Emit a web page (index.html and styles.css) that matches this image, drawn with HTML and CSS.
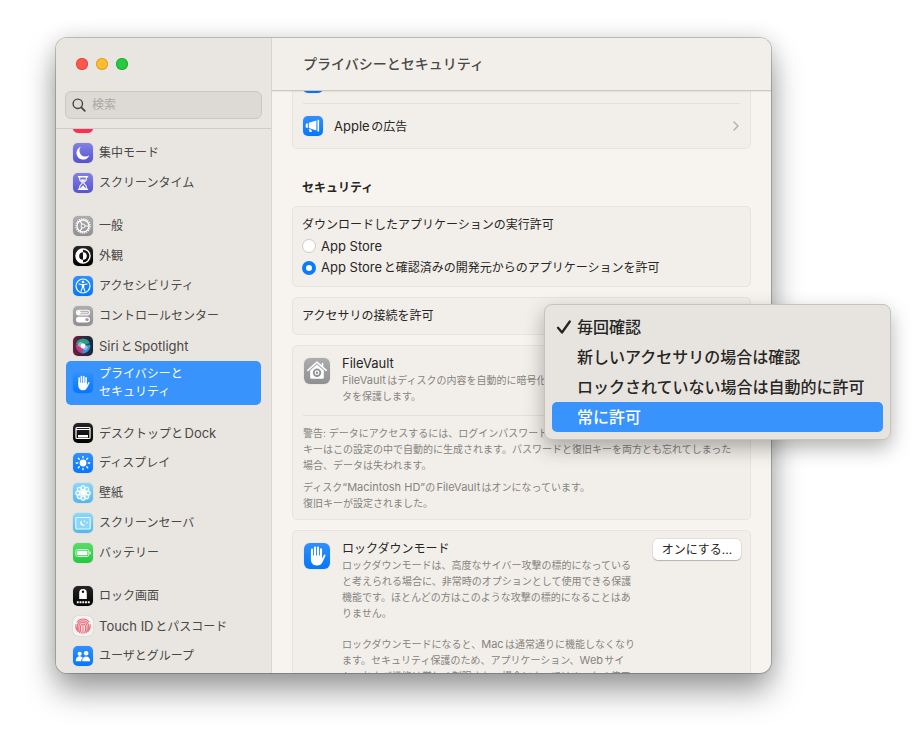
FILE: index.html
```html
<!DOCTYPE html>
<html lang="ja">
<head>
<meta charset="utf-8">
<meta name="viewport" content="width=device-width, initial-scale=1">
<title>プライバシーとセキュリティ</title>
<link rel="stylesheet" href="styles.css">
</head>
<body>
<svg class="defs" aria-hidden="true">
  <symbol id="hand" viewBox="0 0 26 26">
    <path d="M8 6.600V14M11 4.600V14M14 4.600V14M17 6.400V14" fill="none" stroke="#fff" stroke-width="2.100" stroke-linecap="round"/>
    <path d="M6.900 12.600H18v3.200l1.600-3.200q.7-1.400 1.600-.9.600.4.200 1.400L18.600 19q-1.600 3.500-5.800 3.500c-4 0-5.900-2.900-5.900-6.500z" fill="#fff"/>
  </symbol>
</svg>
<div class="desktop">
  <div class="window">
    <aside class="sidebar">
      <div class="lights">
        <button class="light red" aria-label="閉じる"></button>
        <button class="light yellow" aria-label="しまう"></button>
        <button class="light green" aria-label="拡大"></button>
      </div>
      <label class="search">
        <svg viewBox="0 0 14 14" width="14" height="14" aria-hidden="true"><circle cx="5.800" cy="5.800" r="4.700" fill="none" stroke="#464543" stroke-width="1.400"/><path d="M9.300 9.300l3.500 3.500" stroke="#464543" stroke-width="1.800" stroke-linecap="round"/></svg>
        <input type="search" placeholder="検索" aria-label="検索">
      </label>
      <nav class="nav">
        <ul class="group">
          <li><a class="item" href="#"><span class="icon pink"></span></a></li>
          <li><a class="item" href="#"><span class="icon purple"><svg viewBox="0 0 20 20"><path d="M7.800 3.800A6.600 6.600 0 1 0 16.300 12.200 6 6 0 0 1 7.800 3.800z" fill="#fff"/></svg></span><span>集中モード</span></a></li>
          <li><a class="item" href="#"><span class="icon purple"><svg viewBox="0 0 20 20"><path d="M5.500 3.800h9M5.500 16.200h9" stroke="#fff" stroke-width="1.500" stroke-linecap="round"/><path d="M6.700 4v2.200c0 2 2.600 2.600 2.600 3.800s-2.600 1.800-2.600 3.800V16h6.600v-2.200c0-2-2.600-2.600-2.600-3.800s2.600-1.800 2.600-3.800V4" fill="none" stroke="#fff" stroke-width="1.100"/><path d="M7.500 6.400h5L10 9.400zM7.200 15.500l2.800-3.300 2.800 3.300z" fill="#fff"/></svg></span><span>スクリーンタイム</span></a></li>
        </ul>
        <ul class="group">
          <li><a class="item" href="#"><span class="icon gray"><svg viewBox="0 0 20 20" fill="none" stroke="#fff"><circle cx="10" cy="10" r="7.200" stroke-width="1.300" stroke-dasharray="1.130 1.130"/><circle cx="10" cy="10" r="6" stroke-width="1.300"/><circle cx="10" cy="10" r="2" stroke-width="1"/><path d="M12 10h4M9 8.300L7 4.800M9 11.700l-2 3.500" stroke-width="1.200"/></svg></span><span>一般</span></a></li>
          <li><a class="item" href="#"><span class="icon black"><svg viewBox="0 0 20 20"><circle cx="10" cy="10" r="7" fill="none" stroke="#fff" stroke-width="1.400"/><path d="M10 3a7 7 0 0 0 0 14v-3.200a3.800 3.800 0 0 1 0-7.600z" fill="#fff"/><path d="M10 6.200a3.800 3.800 0 0 1 0 7.600z" fill="#fff"/></svg></span><span>外観</span></a></li>
          <li><a class="item" href="#"><span class="icon blue"><svg viewBox="0 0 20 20"><circle cx="10" cy="10" r="7" fill="none" stroke="#fff" stroke-width="1.200"/><circle cx="10" cy="6" r="1.300" fill="#fff"/><path d="M6 8l3 .8h2l3-.8M9.400 9v2.500L8 15.200M10.600 9v2.500l1.400 3.700" fill="none" stroke="#fff" stroke-width="1.100" stroke-linecap="round"/><path d="M9 8.500h2v3.300H9z" fill="#fff"/></svg></span><span>アクセシビリティ</span></a></li>
          <li><a class="item" href="#"><span class="icon gray"><svg viewBox="0 0 20 20"><rect x="3.500" y="4.300" width="13" height="4.600" rx="2.300" fill="none" stroke="#fff" stroke-width="1.100"/><rect x="7" y="5.700" width="8" height="1.800" rx=".9" fill="#e4e3e4"/><circle cx="5.900" cy="6.600" r="1.900" fill="#fff"/><rect x="3" y="10.700" width="14" height="5.800" rx="2.900" fill="#fff"/><circle cx="14" cy="13.600" r="1.700" fill="#a09fa2"/></svg></span><span>コントロールセンター</span></a></li>
          <li><a class="item" href="#"><span class="icon siri"><svg viewBox="0 0 20 20"><circle cx="10" cy="10" r="7.400" fill="#23518e"/><path d="M3 8a7.400 7.400 0 0 1 13.600-1.300L10 10z" fill="#2d9c82"/><path d="M2.800 8.500C3 14 6 17 9.500 17.300L11 9z" fill="#c83b78"/><path d="M17.300 9c.4 5-4 8.700-8 8.400L10 10z" fill="#3a91d8"/><path d="M4.500 10Q6 3.800 10 7t5 4q-1 5-5 2t-5.500-3z" fill="#b4d5e8" opacity=".65"/><circle cx="10" cy="10" r="2.400" fill="#fff"/></svg></span><span><span class="latin">Siri</span>と<span class="latin">Spotlight</span></span></a></li>
          <li><a class="item selected" href="#" aria-current="page"><span class="icon blue"><svg viewBox="0 0 26 26"><use href="#hand"/></svg></span><span>プライバシーと<br>セキュリティ</span></a></li>
        </ul>
        <ul class="group">
          <li><a class="item" href="#"><span class="icon black"><svg viewBox="0 0 20 20"><rect x="3" y="4.500" width="14" height="11" rx="1" fill="none" stroke="#fff" stroke-width="1.200"/><path d="M3 6.500h14" stroke="#fff"/><path d="M5 12h10v2.500H5z" fill="#fff"/></svg></span><span>デスクトップと<span class="latin">Dock</span></span></a></li>
          <li><a class="item" href="#"><span class="icon blue"><svg viewBox="0 0 20 20"><circle cx="10" cy="10" r="3.400" fill="#fff"/><path d="M10 3.300v1.400M10 15.300v1.400M3.300 10h1.400M15.300 10h1.400M5.300 5.300l1 1M13.700 13.700l1 1M14.700 5.300l-1 1M6.300 13.700l-1 1" stroke="#fff" stroke-width="1.300" stroke-linecap="round"/></svg></span><span>ディスプレイ</span></a></li>
          <li><a class="item" href="#"><span class="icon cyan"><svg viewBox="0 0 20 20" fill="#8fd5f5" stroke="#fff" stroke-width="1.200"><circle cx="10" cy="4.800" r="2"/><circle cx="13.700" cy="6.300" r="2"/><circle cx="15.200" cy="10" r="2"/><circle cx="13.700" cy="13.700" r="2"/><circle cx="10" cy="15.200" r="2"/><circle cx="6.300" cy="13.700" r="2"/><circle cx="4.800" cy="10" r="2"/><circle cx="6.300" cy="6.300" r="2"/><circle cx="10" cy="10" r="2.200" fill="#fff"/></svg></span><span>壁紙</span></a></li>
          <li><a class="item" href="#"><span class="icon cyan"><svg viewBox="0 0 20 20"><rect x="2.800" y="4.500" width="14.400" height="11.500" rx="1" fill="#8cd5f5" stroke="#e7f8ff" stroke-width="1.100"/><path d="M8.600 7.200a3 3 0 1 0 4 4.300 3.200 3.200 0 0 1-4-4.300z" fill="#fff"/><circle cx="11.500" cy="8.300" r=".8" fill="#fff"/><circle cx="14" cy="9.800" r=".7" fill="#fff"/></svg></span><span>スクリーンセーバ</span></a></li>
          <li><a class="item" href="#"><span class="icon lime"><svg viewBox="0 0 20 20"><rect x="2.800" y="6.500" width="13" height="7" rx="1.800" fill="none" stroke="#d4f7d8" stroke-width="1"/><rect x="4.200" y="7.800" width="10.200" height="4.400" rx=".8" fill="#fff"/><path d="M16.900 8.500q1.300 1.500 0 3z" fill="#fff" stroke="#fff" stroke-width=".5"/></svg></span><span>バッテリー</span></a></li>
        </ul>
        <ul class="group">
          <li><a class="item" href="#"><span class="icon black"><svg viewBox="0 0 20 20"><path d="M6.200 13V7.200a3.800 4.200 0 0 1 7.600 0V13z" fill="#fff"/><circle cx="10" cy="5.700" r="1.200" fill="#111"/><path d="M3.800 16.200h13" stroke="#fff" stroke-width="1.900" stroke-dasharray="1.900 .85"/></svg></span><span>ロック画面</span></a></li>
          <li><a class="item" href="#"><span class="icon white"><svg viewBox="0 0 20 20" fill="none" stroke="#ea6d7c" stroke-width="1.100" stroke-linecap="round"><path d="M4.200 6A7.200 7.200 0 0 1 16 6M2.900 8.500q-.5 3 1 5.500M17.100 8.500q.5 3-1 5.500M5 15.500Q3.700 12 4.500 9a5.700 5.700 0 0 1 11 0q.8 3-.5 6.500M6.500 16.500Q5.200 13 6 9.500a4.100 4.100 0 0 1 8 0q.8 3.500-.5 7M8.300 17Q6.800 13.500 7.500 10a2.600 2.600 0 0 1 5 0q.7 3.500-.8 7M10 9.500v7.700"/></svg></span><span><span class="latin">Touch ID</span>とパスコード</span></a></li>
          <li><a class="item" href="#"><span class="icon blue"><svg viewBox="0 0 20 20" fill="#fff"><circle cx="6.700" cy="7.800" r="2.100"/><circle cx="13.100" cy="7.300" r="2.300"/><path d="M2.800 15.200c-.3-6 6.200-5.900 6.900-3.100Q8.300 13 8.100 15.200zM9.200 15.200c-.3-6.300 8.300-6.300 8 0z"/></svg></span><span>ユーザとグループ</span></a></li>
        </ul>
      </nav>
    </aside>

    <main class="main">
      <header class="titlebar"><h1>プライバシーとセキュリティ</h1></header>
      <div class="content">
        <section class="card links">
          <a class="link" href="#"><span class="icon blue"></span></a>
          <a class="link" href="#">
            <span class="icon blue"><svg viewBox="0 0 20 20"><path d="M5.800 6.800l7.600-2.300v10l-7.600-2.400zM14.500 3.800h1.600v11.800h-1.600zM3 7.500h1.800v4.300H3q-.8-2 0-4.300zM5.700 13l2.800.8.300 2.200H6.600z" fill="#fff"/></svg></span>
            <span class="grow"><span class="latin">Apple</span>の広告</span>
            <svg class="chevron" viewBox="0 0 6 10" width="6" height="10" aria-hidden="true"><path d="M1 1l4 4-4 4" fill="none" stroke="#b1aeab" stroke-width="1.400" stroke-linecap="round" stroke-linejoin="round"/></svg>
          </a>
        </section>

        <h2>セキュリティ</h2>

        <fieldset class="card sources">
          <legend>ダウンロードしたアプリケーションの実行許可</legend>
          <label><input type="radio" name="source"><span class="latin">App Store</span></label>
          <label><input type="radio" name="source" checked><span><span class="latin">App Store</span>と確認済みの開発元からのアプリケーションを許可</span></label>
        </fieldset>

        <section class="card accessory">アクセサリの接続を許可</section>

        <section class="card">
          <div class="feature vault">
            <span class="icon large gray"><svg viewBox="0 0 26 26"><path d="M3.800 12.300L13 4.200l9.200 8.100M18.500 5.500v3" fill="none" stroke="#fff" stroke-width="1.600" stroke-linecap="round" stroke-linejoin="round"/><path d="M6.200 12.500L13 6.600l6.800 5.900v7.300q0 1-1 1H7.200q-1 0-1-1z" fill="#fff"/><circle cx="13" cy="14.700" r="3.300" fill="none" stroke="#929195" stroke-width="1.800"/><circle cx="13" cy="14.700" r="1.200" fill="#929195"/></svg></span>
            <div class="copy">
              <h3><span class="latin">FileVault</span></h3>
              <p><span class="latin">FileVault</span>はディスクの内容を自動的に暗号化することで、デー<br>タを保護します。</p>
            </div>
          </div>
          <div class="notes">
            <p>警告: データにアクセスするには、ログインパスワードまたは復旧キーが必要です。復旧<br>キーはこの設定の中で自動的に生成されます。パスワードと復旧キーを両方とも忘れてしまった<br>場合、データは失われます。</p>
            <p>ディスク<span class="latin">“Macintosh HD”</span>の<span class="latin">FileVault</span>はオンになっています。<br>復旧キーが設定されました。</p>
          </div>
        </section>

        <section class="card feature">
          <span class="icon large blue"><svg viewBox="0 0 26 26"><use href="#hand"/></svg></span>
          <div class="copy">
            <h3>ロックダウンモード</h3>
            <p>ロックダウンモードは、高度なサイバー攻撃の標的になっている<br>と考えられる場合に、非常時のオプションとして使用できる保護<br>機能です。ほとんどの方はこのような攻撃の標的になることはあ<br>りません。</p>
            <p>ロックダウンモードになると、<span class="latin">Mac</span>は通常通りに機能しなくなり<br>ます。セキュリティ保護のため、アプリケーション、<span class="latin">Web</span>サイ<br>ト、および機能は厳しく制限され、場合によってはまったく使用</p>
          </div>
          <button class="push">オンにする...</button>
        </section>
      </div>
    </main>
  </div>

  <div class="menu" role="menu" aria-label="アクセサリの接続を許可">
    <button role="menuitemradio" aria-checked="true"><svg viewBox="0 0 16 16" width="16" height="16" aria-hidden="true"><path d="M2 8.800l4 4.700L13.800 2.500" fill="none" stroke="#242424" stroke-width="2.300" stroke-linecap="round" stroke-linejoin="round"/></svg><span>毎回確認</span></button>
    <button role="menuitemradio" aria-checked="false"><span>新しいアクセサリの場合は確認</span></button>
    <button role="menuitemradio" aria-checked="false"><span>ロックされていない場合は自動的に許可</span></button>
    <button class="active" role="menuitemradio" aria-checked="false"><span>常に許可</span></button>
  </div>
</div>
</body>
</html>
```
FILE: styles.css
```css
* { box-sizing: border-box; }

body {
  margin: 0;
  height: 100vh;
  padding: 38px 150px 74px 56px;
  background: #fff;
  color: #272625;
  font: 12px/16px Inter, "Noto Sans CJK JP", sans-serif;
  text-autospace: normal;
  overflow: hidden;
}

h1, h2, h3, p, ul { margin: 0; padding: 0; }
ul { list-style: none; }
a { color: inherit; text-decoration: none; }
button, input { font: inherit; color: inherit; }
button { border: 0; padding: 0; }
.defs { display: none; }

/* Latin words are set a little larger than the kana beside them */
.latin { font-size: 13px; }

.desktop { position: relative; height: 100%; }

.window {
  display: flex;
  height: 100%;
  overflow: hidden;
  border-radius: 11px;
  background: #f7f4ef;
  box-shadow: 0 0 0 1px rgba(0, 0, 0, .2), 0 18px 32px rgba(0, 0, 0, .38), 0 0 22px rgba(0, 0, 0, .12);
}

/* Sidebar */
.sidebar {
  display: flex;
  flex-direction: column;
  flex: 0 0 216px;
  min-width: 0;
  border-right: 1px solid #d9d6d2;
  background: #e9e6e1;
  color: #4a4846;
}

.lights { display: flex; gap: 8px; padding: 20px 20px 21px; }
.light { width: 12px; height: 12px; border-radius: 50%; }
.red { background: #ff5851; box-shadow: inset 0 0 0 1px #e2463f; }
.yellow { background: #febc2e; box-shadow: inset 0 0 0 1px #e0a028; }
.green { background: #28c840; box-shadow: inset 0 0 0 1px #1eae32; }

.search {
  display: flex;
  align-items: center;
  gap: 6px;
  height: 28px;
  margin: 0 9px 9px;
  padding: 0 6px;
  border: 1px solid #cbc8c4;
  border-radius: 6px;
  background: #dddad5;
}
.search svg { flex: none; }
.search input { flex: 1; width: 100%; min-width: 0; padding: 0; border: 0; outline: 0; background: none; }
.search input::placeholder { color: #aba8a4; opacity: 1; }

.nav { flex: 1; min-height: 0; overflow: hidden; padding: 0 10px; border-top: 1px solid #cfccc8; }
.group { margin-bottom: 13px; }
.group:first-child { margin-top: -21px; }

.item {
  display: flex;
  align-items: center;
  gap: 6px;
  height: 30px;
  padding: 0 7px;
  line-height: 18px;
  white-space: nowrap;
}
.item.selected { height: 44px; border-radius: 5px; background: #3893fd; color: #fff; }

.icon { flex: none; width: 20px; height: 20px; border-radius: 5px; box-shadow: 0 0 1px rgba(0, 0, 0, .3); }
.icon svg { display: block; width: 100%; height: 100%; }
.large { width: 26px; height: 26px; border-radius: 6px; }
.pink { background: #ff2d55; }
.purple { background: linear-gradient(#8380e5, #5553cf); }
.gray { background: linear-gradient(#adacae, #8f8e92); }
.black { background: linear-gradient(#262626, #000); }
.blue { background: linear-gradient(#2f90ff, #0577fb); }
.cyan { background: linear-gradient(#89d9fb, #51b8ee); }
.lime { background: linear-gradient(#56de69, #24c93e); }
.white { background: #f5f3f1; }
.siri { background: linear-gradient(90deg, #6e1b3e, #102c3a); }

/* Main pane */
.main { display: flex; flex: 1; flex-direction: column; min-width: 0; }

.titlebar {
  z-index: 1;
  flex: none;
  height: 53px;
  padding: 16px 31px;
  border-bottom: 1px solid #cbc8c4;
  background: #f2efea;
  box-shadow: 0 1px 1px rgba(0, 0, 0, .05);
}
h1 { color: #4b4947; font-size: 14px; line-height: 20px; font-weight: 500; }
h2 { margin-top: 20px; padding: 0 10px; font-size: 12px; line-height: 17px; font-weight: 600; }
h3 { font-size: 12px; line-height: 17px; font-weight: 400; }

.content { display: flex; flex: 1; flex-direction: column; gap: 10px; min-height: 0; overflow: hidden; padding: 0 20px; }

.card {
  flex: none;
  min-width: 0;
  margin: 0;
  padding: 0 10px;
  border: 1px solid #e7e4df;
  border-radius: 5px;
  background: #f2efea;
}

.links { margin-top: -34px; }
.link { display: flex; align-items: center; gap: 11px; height: 45px; }
.link:first-child { align-items: flex-end; padding-bottom: 10px; }
.link + .link { border-top: 1px solid #e3e0dc; }
.grow { flex: 1; }
.chevron { margin-right: 1px; }

.sources { display: flex; flex-direction: column; gap: 5px; padding: 9px 9px 10px; }
.sources legend { float: left; width: 100%; padding: 0; line-height: 17px; }
.sources label { display: flex; align-items: center; gap: 5px; line-height: 16px; white-space: nowrap; }
.sources input {
  appearance: none;
  flex: none;
  width: 14px;
  height: 14px;
  margin: 0;
  border: 1px solid #cecbc8;
  border-radius: 50%;
  background: #fff;
}
.sources input:checked { border: 4px solid #0a7aff; }

.accessory { padding: 10px 9px; }

.feature { display: flex; align-items: flex-start; gap: 12px; padding: 9px 9px 9px 11px; }
.feature .icon { margin-top: 3px; }
.copy { flex: 1; min-width: 0; white-space: nowrap; }
.copy p, .notes { color: #868380; font-size: 10px; line-height: 16px; }
.copy p .latin, .notes .latin { font-size: 11px; }
.copy p + p { margin-top: 15px; }

.vault { padding: 9px 1px 11px; }
.notes { padding: 9px 0 8px; border-top: 1px solid #e3e0dc; white-space: nowrap; }
.notes p + p { margin-top: 6px; }

.push {
  flex: none;
  width: 88px;
  height: 21px;
  margin-top: -1px;
  border-radius: 5px;
  background: #fff;
  box-shadow: 0 0 0 1px rgba(0, 0, 0, .06), 0 1px 1px rgba(0, 0, 0, .2);
}

/* Pop-up menu that lies over the window edge */
.menu {
  position: absolute;
  top: 266px;
  left: 488px;
  z-index: 2;
  padding: 7px;
  border: 1px solid #c6c3bf;
  border-radius: 8px;
  background: #e7e4df;
  box-shadow: 0 8px 20px rgba(0, 0, 0, .3);
}
.menu button {
  display: grid;
  grid-template-columns: 16px auto;
  justify-content: start;
  gap: 5px;
  align-items: center;
  width: 100%;
  height: 30px;
  padding: 0 18px 0 4px;
  border-radius: 5px;
  background: none;
  font-size: 16px;
  font-weight: 500;
  text-align: left;
  white-space: nowrap;
}
.menu span { grid-column: 2; }
.menu .active { background: #3893fd; color: #fff; }
```
